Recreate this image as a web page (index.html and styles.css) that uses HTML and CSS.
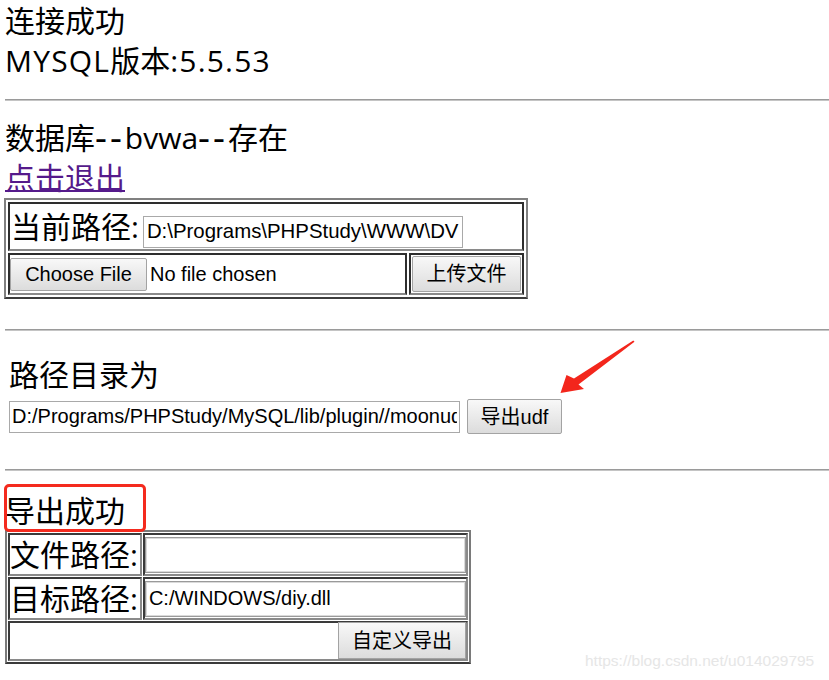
FILE: index.html
```html
<!DOCTYPE html>
<html lang="zh-CN">
<head>
<meta charset="utf-8">
<title>UDF</title>
<link rel="stylesheet" href="styles.css">
</head>
<body>
<div class="block">
  <div class="line">连接成功</div>
  <div class="line"><span class="wide">MYSQL</span>版本<span class="wide">:5.5.53</span></div>
</div>
<hr class="hr1">
<div class="block">
  <div class="line">数据库<span class="dash">--</span>bvwa<span class="dash">--</span>存在</div>
  <div class="line"><a class="logout" href="#">点击退出</a></div>
</div>
<table class="t1">
  <tr>
    <td colspan="2" class="t1-path">
      <div class="path-row">
        <span class="lbl">当前路径:</span>
        <input class="t1-input" type="text" value="D:\Programs\PHPStudy\WWW\DV">
      </div>
    </td>
  </tr>
  <tr>
    <td class="t1-file">
      <div class="file">
        <button class="btn btn-choose" type="button">Choose File</button>
        <span class="file-text">No file chosen</span>
      </div>
    </td>
    <td class="t1-up">
      <button class="btn btn-upload" type="button">上传文件</button>
    </td>
  </tr>
</table>
<hr class="hr2">
<div class="udf">
  <div class="line">路径目录为</div>
  <div class="udf-row">
    <input class="udf-input" type="text" value="D:/Programs/PHPStudy/MySQL/lib/plugin//moonudf.dll">
    <button class="btn btn-udf" type="button">导出udf</button>
  </div>
</div>
<hr class="hr3">
<div class="ok">
  <div class="line">导出成功</div>
  <span class="mark"></span>
</div>
<table class="t2">
  <tr>
    <td class="lbl2">文件路径:</td>
    <td class="t2-in"><input class="t2-input" type="text" value=""></td>
  </tr>
  <tr>
    <td class="lbl2">目标路径:</td>
    <td class="t2-in"><input class="t2-input" type="text" value="C:/WINDOWS/diy.dll"></td>
  </tr>
  <tr>
    <td colspan="2" class="t2-act"><div class="act-row"><button class="btn btn-export" type="button">自定义导出</button></div></td>
  </tr>
</table>
<div class="watermark">https://blog.csdn.net/u014029795</div>
<svg class="arrow" width="829" height="680" viewBox="0 0 829 680" aria-hidden="true">
  <polygon points="634.5,341.8 578.5,384.5 584,389 560.5,393 566.5,375 574,378.5 633.3,340.6" fill="#f3261c"/>
</svg>
</body>
</html>
```

FILE: styles.css
```css
html, body {
  margin: 0;
  background: #fff;
}
body {
  padding: 0 0 0 5px;
  font-family: "Open Sans", "Noto Sans CJK SC", sans-serif;
  font-size: 30px;
  line-height: 40px;
  color: #000;
  position: relative;
  height: 680px;
  overflow: hidden;
}
.line {
  height: 40px;
  line-height: 42px;
  white-space: nowrap;
}
.wide {
  letter-spacing: 1.2px;
}
.dash {
  font-size: 37px;
  line-height: 1;
  letter-spacing: 3px;
  vertical-align: -2px;
}
hr {
  border: 0;
  border-top: 1px solid #9a9a9a;
  border-bottom: 1px solid #c4c4c4;
  height: 0;
  margin: 0;
}
.hr1 { margin: 19px 0 16px 0; }
.hr2 { margin: 30px 0 23px 0; }
.hr3 { margin: 35px 0 19px 0; }

.logout {
  color: #551a8b;
  text-decoration: underline;
  text-decoration-thickness: 2px;
}

/* table 1 */
.t1 {
  border-collapse: separate;
  border-spacing: 2px;
  border: 2px solid;
  border-color: #808080 #808080 #3c3c3c #808080;
  margin: 1px 0 0 -1px;
}
.t1 td {
  border: 2px solid;
  border-color: #2e2e2e #2e2e2e #8a8a8a #2e2e2e;
  padding: 1px;
}
.path-row {
  display: flex;
  align-items: baseline;
  height: 43px;
}
.lbl {
  font-size: 30px;
  line-height: 44px;
  white-space: nowrap;
}
.t1-input {
  width: 320px;
  height: 32px;
  box-sizing: border-box;
  margin: 0 0 0 4px;
  border: 1px solid #a9a9a9;
  padding: 0 2px 0 3px;
  font: 20.4px "Liberation Sans", Arial, sans-serif;
  color: #000;
  background: #fff;
}
.file {
  width: 393px;
  height: 36px;
  display: flex;
  align-items: center;
}
.btn {
  box-sizing: border-box;
  margin: 0;
  padding: 0;
  border: 1px solid #a3a3a3;
  border-radius: 2px;
  background: linear-gradient(#f8f8f8, #dcdcdc);
  color: #000;
  font-family: "Liberation Sans", Arial, "Noto Sans CJK SC", sans-serif;
  font-size: 20px;
  line-height: 1;
  white-space: nowrap;
}
.btn-choose {
  width: 137px;
  height: 33px;
  margin-left: -1px;
}
.file-text {
  margin-left: 3px;
  font: 20px "Liberation Sans", Arial, sans-serif;
  white-space: nowrap;
}
.t1-up {
  vertical-align: middle;
}
.btn-upload {
  display: block;
  width: 109px;
  height: 36px;
}

/* udf section */
.udf {
  margin-left: 4px;
}
.udf-row {
  display: flex;
  align-items: center;
  height: 35px;
  margin-top: 5px;
}
.udf-input {
  width: 451px;
  height: 32px;
  box-sizing: border-box;
  margin: 0;
  border: 1px solid #a9a9a9;
  padding: 0 2px;
  font: 20px "Liberation Sans", Arial, sans-serif;
  color: #000;
  background: #fff;
}
.btn-udf {
  width: 95px;
  height: 35px;
  margin-left: 7px;
}

/* success */
.ok {
  position: relative;
}
.mark {
  position: absolute;
  left: -1px;
  top: -6px;
  width: 142px;
  height: 48px;
  box-sizing: border-box;
  border: 3px solid #f42a1e;
  border-radius: 5px;
}

/* table 2 */
.t2 {
  border-collapse: separate;
  border-spacing: 1px;
  border: 2px solid;
  border-color: #7a7a7a #7a7a7a #3a3a3a #7a7a7a;
  margin: 0;
}
.t2 td {
  border: 2px solid;
  border-color: #3a3a3a #8a8a8a #8a8a8a #3a3a3a;
  padding: 0;
}
.lbl2 {
  font-size: 30px;
  line-height: 39px;
  height: 39px;
  padding-right: 2px !important;
  white-space: nowrap;
}
.t2-in {
  vertical-align: middle;
}
.t2-input {
  display: block;
  width: 321px;
  height: 36px;
  box-sizing: border-box;
  margin: 0;
  border: 1px solid #9a9a9a;
  box-shadow: inset 0 0 0 1px #dadada;
  padding: 0 3px;
  font: 20px "Liberation Sans", Arial, sans-serif;
  color: #000;
  background: #fff;
}
.act-row {
  display: flex;
  justify-content: flex-end;
  height: 36px;
}
.btn-export {
  width: 128px;
  height: 37px;
  margin-top: -1px;
  border-radius: 0;
}

.watermark {
  position: absolute;
  left: 585px;
  top: 651px;
  font: 15.5px/20px "Liberation Sans", Arial, sans-serif;
  color: #e6e6e6;
  white-space: nowrap;
}
.arrow {
  position: absolute;
  left: 0;
  top: 0;
  pointer-events: none;
}
```
